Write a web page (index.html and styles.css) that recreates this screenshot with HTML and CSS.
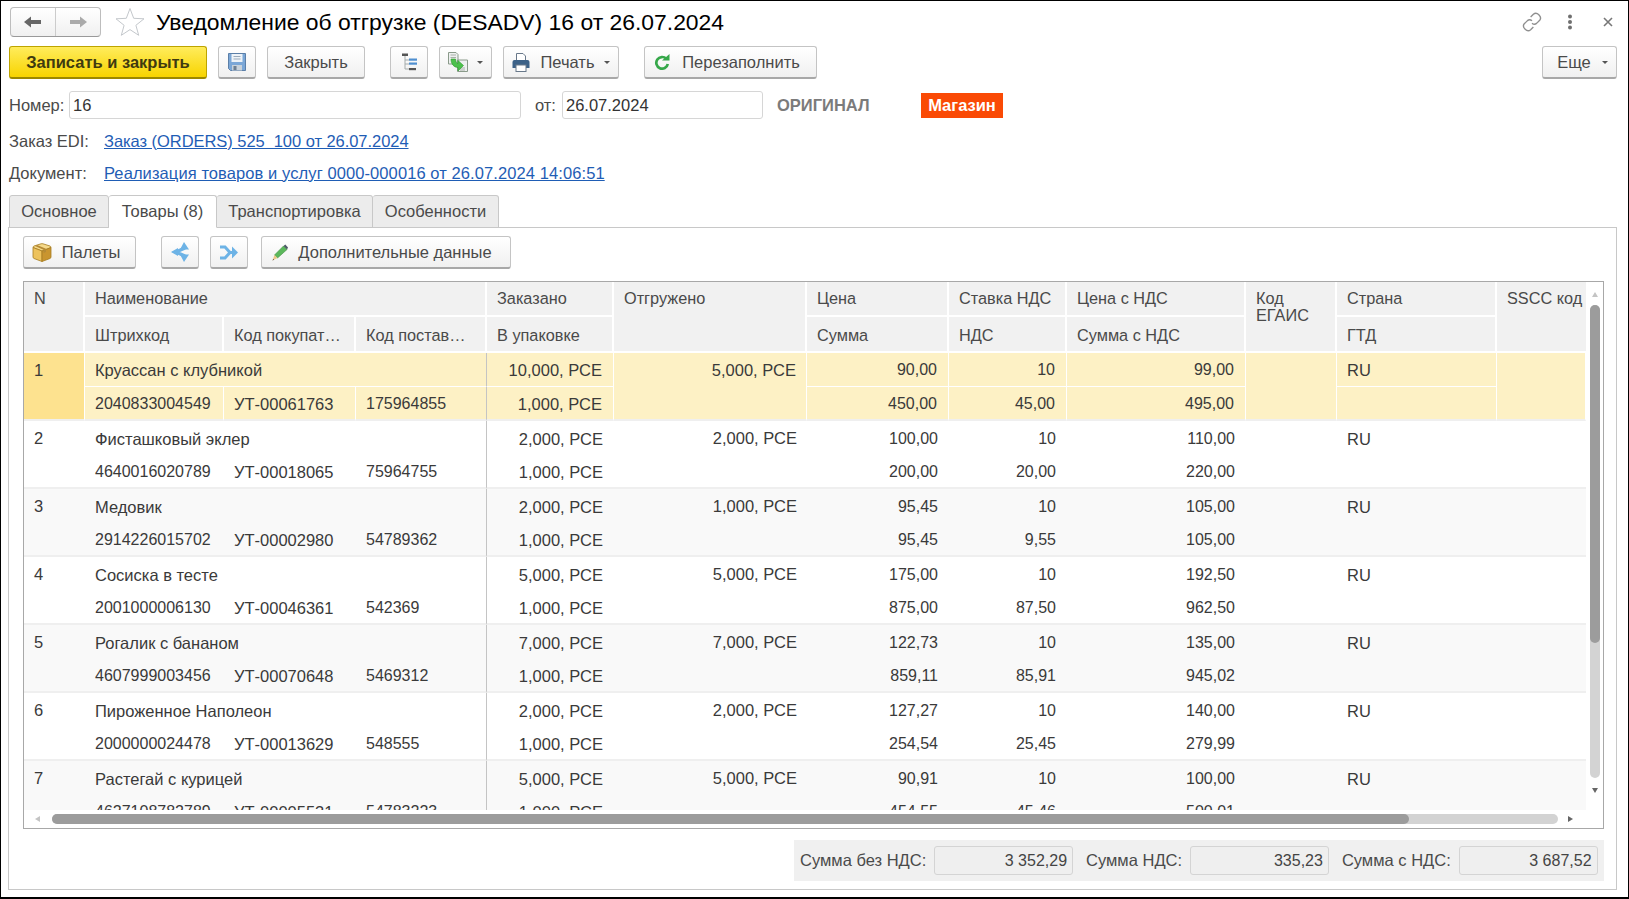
FILE: index.html
```html
<!DOCTYPE html>
<html lang="ru">
<head>
<meta charset="utf-8">
<title>Уведомление об отгрузке (DESADV) 16 от 26.07.2024</title>
<link rel="stylesheet" href="styles.css">
</head>
<body>
<div class="frame">
  <header class="head">
    <div class="nav">
      <button class="nav-btn"><svg width="18" height="14" viewBox="0 0 18 14"><path d="M0 7 7 1.500V5H17V9H7V12.500Z" fill="#666"/></svg></button>
      <button class="nav-btn"><svg width="18" height="14" viewBox="0 0 18 14"><path d="M18 7 11 1.500V5H1V9H11V12.500Z" fill="#aaa"/></svg></button>
    </div>
    <svg class="star" width="30" height="30" viewBox="0 0 30 30"><path d="M15 1.500 18.700 11.300 29 11.800 20.900 18.300 23.700 28.300 15 22.600 6.300 28.300 9.100 18.300 1 11.800 11.300 11.300Z" fill="#fff" stroke="#c4c8cc"/></svg>
    <h1 class="title">Уведомление об отгрузке (DESADV) 16 от 26.07.2024</h1>
    <div class="head-icons">
      <svg width="20" height="20" viewBox="0 0 22 22" fill="none" stroke="#8f8f8f" stroke-width="1.500"><path d="M9.500 5.500 12.500 2.500C14 1.200 16.500 1 18.500 3S20.800 7.500 19.500 9L16 12.500C14.500 13.800 12.500 13.600 11 12.300"/><path d="M12.500 16.500 9.500 19.500C8 20.800 5.500 21 3.500 19S1.200 14.500 2.500 13L6 9.500C7.500 8.200 9.500 8.400 11 9.700"/></svg>
      <svg width="6" height="16" viewBox="0 0 6 16" fill="#6f6f6f"><circle cx="3" cy="2.500" r="2"/><circle cx="3" cy="8" r="2"/><circle cx="3" cy="13.500" r="2"/></svg>
      <svg width="12" height="12" viewBox="0 0 12 12" stroke="#777" stroke-width="1.600"><path d="M2 2 10 10M10 2 2 10"/></svg>
    </div>
  </header>

  <div class="toolbar">
    <button class="btn btn-primary">Записать и закрыть</button>
    <button class="btn btn-icon">
      <svg width="18" height="18" viewBox="0 0 18 18"><path d="M.5.500H17.500V17.500H2.500L.5 15.500Z" fill="#7ba7d7" stroke="#5b7fa8"/><rect x="3.500" y="1" width="11" height="8" fill="#eef3f8"/><path d="M5.500 3.500H12.500M5.500 6H12.500" stroke="#9ab"/><rect x="4" y="12" width="10" height="5.500" fill="#c9d2da"/><rect x="5.500" y="13" width="3" height="4" fill="#6d7f92"/></svg>
    </button>
    <button class="btn btn-close">Закрыть</button>
    <button class="btn btn-icon btn-tree">
      <svg width="17" height="18" viewBox="0 0 17 18"><path d="M4 2V16M4 7H8M4 11H8M4 16H8" stroke="#a4abab" fill="none"/><rect x="1" y="0.500" width="6" height="2.500" fill="#555"/><rect x="8" y="5.500" width="8" height="2.200" fill="#4f8fd0"/><rect x="8" y="9.500" width="8" height="2.200" fill="#4f8fd0"/><rect x="8" y="15" width="7" height="2.200" fill="#555"/></svg>
    </button>
    <button class="btn btn-copy">
      <svg width="20" height="20" viewBox="0 0 20 20"><path d="M.5.500H8L10 2.500V12H.5Z" fill="#eef0f0" stroke="#8a9a8a"/><path d="M9.500 8H19.500V19.500H9.500Z" fill="#eef0f0" stroke="#8a9a8a"/><path d="M2.500 3H8M2.500 5.500H8M12 16H17M12 18H17" stroke="#a8b0a8"/><path d="M3 7H7.500C8 10.500 9 11.500 10 11.500V8.500L15.500 13.500 10 19V15.500C6 15.500 3 12 3 7Z" fill="#4cc04c" stroke="#2e9a2e" stroke-width=".6"/></svg>
      <span class="caret"></span>
    </button>
    <button class="btn btn-print">
      <svg class="ico" width="18" height="19" viewBox="0 0 18 19"><path d="M4.500.500H11L13.500 3V8H4.500Z" fill="#fff" stroke="#68788a"/><path d="M.5 9Q.5 7 2.500 7H15.500Q17.500 7 17.500 9V15H.5Z" fill="#3d6288"/><rect x="4" y="12" width="10" height="6.500" fill="#fff" stroke="#68788a"/></svg>
      <span>Печать</span><span class="caret"></span>
    </button>
    <button class="btn btn-refill">
      <svg class="ico ico-refill" width="16" height="16" viewBox="0 0 16 16"><path d="M12.300 4.800A5.800 5.800 0 1 0 13.800 10" fill="none" stroke="#36a84a" stroke-width="2.700"/><path d="M8 6.500H15.500V0Z" fill="#36a84a"/></svg>
      <span>Перезаполнить</span>
    </button>
    <button class="btn btn-more"><span>Еще</span><span class="caret"></span></button>
  </div>

  <div class="fields">
    <label class="lbl lbl-num">Номер:</label>
    <div class="input input-num">16</div>
    <label class="lbl lbl-from">от:</label>
    <div class="input input-date">26.07.2024</div>
    <span class="status">ОРИГИНАЛ</span>
    <span class="tag">Магазин</span>
  </div>

  <div class="linkrow"><span class="link-lbl">Заказ EDI:</span><a class="link link-order" href="#">Заказ (ORDERS) 525&nbsp; 100 от 26.07.2024</a></div>
  <div class="linkrow"><span class="link-lbl">Документ:</span><a class="link link-doc" href="#">Реализация товаров и услуг 0000-000016 от 26.07.2024 14:06:51</a></div>

  <nav class="tabs">
    <div class="tab tab-1">Основное</div>
    <div class="tab tab-2 tab-active">Товары (8)</div>
    <div class="tab tab-3">Транспортировка</div>
    <div class="tab tab-4">Особенности</div>
  </nav>

  <section class="panel">
    <div class="subbar">
      <button class="btn btn-pal">
        <svg class="ico" width="20" height="19" viewBox="0 0 20 19"><path d="M1 4.500Q1 3.500 2 3L9 .8Q10 .5 11 .8L18 3Q19 3.500 19 4.500L10 8Z" fill="#f5d98a" stroke="#a67c22" stroke-width=".8"/><path d="M1 4.500 10 8V18.500L2 15.500Q1 15 1 14Z" fill="#edc25c" stroke="#a67c22" stroke-width=".8"/><path d="M19 4.500 10 8V18.500L18 15.500Q19 15 19 14Z" fill="#c9952f" stroke="#a67c22" stroke-width=".8"/><path d="M5 2 14 5.700V9L11.500 10V6.700L3 3Z" fill="#b58a35"/></svg>
        <span>Палеты</span>
      </button>
      <button class="btn btn-arrow btn-ar1">
        <svg width="18" height="20" viewBox="0 0 18 20"><path d="M14 6 5 10 14 14" fill="none" stroke="#6db3e6" stroke-width="3.500"/><path d="M0 10 7 6V14Z" fill="#6db3e6"/><path d="M13 0 18 7.500 9 7.500Z" fill="#6db3e6"/><path d="M13 20 18 12.500 9 12.500Z" fill="#6db3e6"/></svg>
      </button>
      <button class="btn btn-arrow">
        <svg width="18" height="15" viewBox="0 0 18 15"><path d="M0 2H5L10 7.500 5 13H0M9 7.500H14" fill="none" stroke="#6db3e6" stroke-width="3"/><path d="M12 1.500 18 7.500 12 13.500Z" fill="#6db3e6"/></svg>
      </button>
      <button class="btn btn-extra">
        <svg class="ico" width="16" height="17" viewBox="0 0 16 17"><path d="M11.500 2 15 5.500 5.500 14 2.500 11Z" fill="#5cb85c" stroke="#3f8f3f" stroke-width=".6"/><path d="M11.500 2 13.300.5 16 3.500 15 5.500Z" fill="#4d5a66"/><path d="M2.500 11 5.500 14 .5 16.500Z" fill="#edc88a"/><path d="M1.200 15 2 15.800 .5 16.500Z" fill="#333"/></svg>
        <span>Дополнительные данные</span>
      </button>
    </div>

    <div class="grid">
      <div class="grid-top">
        <div class="table-clip">
          <table class="tbl">
            <colgroup>
              <col class="c-n"><col class="c-bar"><col class="c-buy"><col class="c-sup"><col class="c-ord"><col class="c-shp"><col class="c-prc"><col class="c-vat"><col class="c-tot"><col class="c-ega"><col class="c-cty"><col class="c-ssc">
            </colgroup>
            <thead>
              <tr class="h1">
                <th rowspan="2">N</th><th colspan="3">Наименование</th><th>Заказано</th><th rowspan="2">Отгружено</th><th>Цена</th><th>Ставка НДС</th><th>Цена с НДС</th><th rowspan="2" class="wrap">Код<br>ЕГАИС</th><th>Страна</th><th rowspan="2" class="nowrap">SSCC код</th>
              </tr>
              <tr class="h2">
                <th>Штрихкод</th><th>Код покупат…</th><th>Код постав…</th><th>В упаковке</th><th>Сумма</th><th>НДС</th><th>Сумма с НДС</th><th>ГТД</th>
              </tr>
            </thead>
            <tbody>
              <tr class="l1 sel"><td rowspan="2" class="num">1</td><td colspan="3" class="sep">Круассан с клубникой</td><td class="r">10,000, РСЕ</td><td rowspan="2" class="r top">5,000, РСЕ</td><td class="n">90,00</td><td class="n">10</td><td class="n">99,00</td><td rowspan="2"></td><td>RU</td><td rowspan="2"></td></tr>
              <tr class="l2 sel"><td class="b">2040833004549</td><td>УТ-00061763</td><td class="sep b">175964855</td><td class="r">1,000, РСЕ</td><td class="n">450,00</td><td class="n">45,00</td><td class="n">495,00</td><td></td></tr>

              <tr class="l1"><td rowspan="2" class="num">2</td><td colspan="3" class="sep">Фисташковый эклер</td><td class="r">2,000, РСЕ</td><td rowspan="2" class="r top">2,000, РСЕ</td><td class="n">100,00</td><td class="n">10</td><td class="n">110,00</td><td rowspan="2"></td><td>RU</td><td rowspan="2"></td></tr>
              <tr class="l2"><td class="b">4640016020789</td><td>УТ-00018065</td><td class="sep b">75964755</td><td class="r">1,000, РСЕ</td><td class="n">200,00</td><td class="n">20,00</td><td class="n">220,00</td><td></td></tr>

              <tr class="l1 alt"><td rowspan="2" class="num">3</td><td colspan="3" class="sep">Медовик</td><td class="r">2,000, РСЕ</td><td rowspan="2" class="r top">1,000, РСЕ</td><td class="n">95,45</td><td class="n">10</td><td class="n">105,00</td><td rowspan="2"></td><td>RU</td><td rowspan="2"></td></tr>
              <tr class="l2 alt"><td class="b">2914226015702</td><td>УТ-00002980</td><td class="sep b">54789362</td><td class="r">1,000, РСЕ</td><td class="n">95,45</td><td class="n">9,55</td><td class="n">105,00</td><td></td></tr>

              <tr class="l1"><td rowspan="2" class="num">4</td><td colspan="3" class="sep">Сосиска в тесте</td><td class="r">5,000, РСЕ</td><td rowspan="2" class="r top">5,000, РСЕ</td><td class="n">175,00</td><td class="n">10</td><td class="n">192,50</td><td rowspan="2"></td><td>RU</td><td rowspan="2"></td></tr>
              <tr class="l2"><td class="b">2001000006130</td><td>УТ-00046361</td><td class="sep b">542369</td><td class="r">1,000, РСЕ</td><td class="n">875,00</td><td class="n">87,50</td><td class="n">962,50</td><td></td></tr>

              <tr class="l1 alt"><td rowspan="2" class="num">5</td><td colspan="3" class="sep">Рогалик с бананом</td><td class="r">7,000, РСЕ</td><td rowspan="2" class="r top">7,000, РСЕ</td><td class="n">122,73</td><td class="n">10</td><td class="n">135,00</td><td rowspan="2"></td><td>RU</td><td rowspan="2"></td></tr>
              <tr class="l2 alt"><td class="b">4607999003456</td><td>УТ-00070648</td><td class="sep b">5469312</td><td class="r">1,000, РСЕ</td><td class="n">859,11</td><td class="n">85,91</td><td class="n">945,02</td><td></td></tr>

              <tr class="l1"><td rowspan="2" class="num">6</td><td colspan="3" class="sep">Пироженное Наполеон</td><td class="r">2,000, РСЕ</td><td rowspan="2" class="r top">2,000, РСЕ</td><td class="n">127,27</td><td class="n">10</td><td class="n">140,00</td><td rowspan="2"></td><td>RU</td><td rowspan="2"></td></tr>
              <tr class="l2"><td class="b">2000000024478</td><td>УТ-00013629</td><td class="sep b">548555</td><td class="r">1,000, РСЕ</td><td class="n">254,54</td><td class="n">25,45</td><td class="n">279,99</td><td></td></tr>

              <tr class="l1 alt"><td rowspan="2" class="num">7</td><td colspan="3" class="sep">Растегай с курицей</td><td class="r">5,000, РСЕ</td><td rowspan="2" class="r top">5,000, РСЕ</td><td class="n">90,91</td><td class="n">10</td><td class="n">100,00</td><td rowspan="2"></td><td>RU</td><td rowspan="2"></td></tr>
              <tr class="l2 alt"><td class="b">4627108782789</td><td>УТ-00005531</td><td class="sep b">54783223</td><td class="r">1,000, РСЕ</td><td class="n">454,55</td><td class="n">45,46</td><td class="n">500,01</td><td></td></tr>
            </tbody>
          </table>
        </div>
        <div class="vscroll">
          <span class="ar ar-up"></span>
          <div class="vtrack"><div class="vthumb"></div></div>
          <span class="ar ar-down"></span>
        </div>
      </div>
      <div class="hscroll">
        <span class="ar ar-left"></span>
        <div class="htrack"><div class="hthumb"></div></div>
        <span class="ar ar-right"></span>
      </div>
    </div>

    <div class="totals-wrap">
      <div class="totals">
        <span class="tot-lbl">Сумма без НДС:</span><div class="tot-val">3 352,29</div>
        <span class="tot-lbl">Сумма НДС:</span><div class="tot-val">335,23</div>
        <span class="tot-lbl">Сумма с НДС:</span><div class="tot-val">3 687,52</div>
      </div>
    </div>
  </section>
</div>
</body>
</html>
```

FILE: styles.css
```css
* { box-sizing: border-box; }
html, body { margin: 0; padding: 0; }
body { font-family: "Liberation Sans", Arial, sans-serif; font-size: 16.5px; color: #4a4a4a; background: #fff; }

.frame { width: 1629px; height: 899px; border: 1px solid #000; border-bottom-width: 2px; overflow: hidden; background: #fff; }

/* head */
.head { display: flex; align-items: center; height: 34px; margin-top: 4px; padding-left: 9px; }
.nav { display: flex; width: 91px; height: 30px; border: 1px solid #bdbdbd; border-bottom-color: #999; border-radius: 4px; background: linear-gradient(#fff, #f0f0f0); }
.nav-btn { flex: 1; border: 0; padding: 0; background: none; display: flex; align-items: center; justify-content: center; }
.nav-btn + .nav-btn { border-left: 1px solid #ccc; }
.star { margin-left: 14px; }
.title { margin: 0 0 0 11px; font-size: 22.9px; font-weight: 400; color: #000; white-space: nowrap; }
.head-icons { margin-left: auto; display: flex; align-items: center; padding-right: 14px; }
.head-icons svg:nth-child(2) { margin-left: 25px; }
.head-icons svg:nth-child(3) { margin-left: 29px; }

/* buttons */
.btn { height: 33px; padding: 0; font: inherit; color: #4a4a4a; display: inline-flex; align-items: center; justify-content: center; border: 1px solid #c4c4c4; border-bottom: 2px solid #a8a8a8; border-radius: 3px; background: linear-gradient(#fff, #f0f0f0); white-space: nowrap; }
.ico { margin-right: 10px; }
.ico-refill { margin-right: 12px; }
.caret { display: inline-block; width: 0; height: 0; border-left: 3px solid transparent; border-right: 3px solid transparent; border-top: 3px solid #555; }

.toolbar { display: flex; margin-top: 7px; padding: 0 11px 0 8px; }
.btn-primary { width: 198px; font-weight: 700; color: #3f3a10; background: linear-gradient(#ffec5c, #f8d400); border-color: #bda400; border-bottom-color: #9c8800; }
.btn-icon { width: 38px; margin-left: 11px; }
.btn-close { width: 98px; margin-left: 11px; }
.btn-tree { margin-left: 25px; }
.btn-copy { width: 53px; margin-left: 11px; }
.btn-copy .caret { margin-left: 9px; }
.btn-print { width: 116px; margin-left: 11px; }
.btn-print .caret { margin-left: 9px; }
.btn-refill { width: 173px; margin-left: 25px; padding-right: 7px; }
.btn-more { width: 75px; margin-left: auto; padding-left: 6px; }
.btn-more .caret { margin-left: 11px; }

/* fields */
.fields { display: flex; align-items: center; height: 28px; margin-top: 12px; padding-left: 8px; }
.lbl-num { width: 60px; }
.lbl-from { width: 27px; margin-left: 14px; }
.input { height: 28px; line-height: 26px; padding-left: 3px; border: 1px solid #d6d6d6; border-radius: 3px; color: #333; background: #fff; }
.input-num { width: 452px; }
.input-date { width: 201px; }
.status { margin-left: 14px; width: 144px; font-weight: 700; color: #7b7b7b; }
.tag { width: 82px; height: 25px; line-height: 24px; text-align: center; font-weight: 700; color: #fff; background: #fa4a05; }

.linkrow { display: flex; align-items: center; height: 32px; padding-left: 8px; }
.fields + .linkrow { margin-top: 6px; }
.link-lbl { width: 95px; }
.link { color: #1f5db5; text-decoration: underline; }
.link-order { letter-spacing: -.05px; }
.link-doc { letter-spacing: .09px; }

/* tabs */
.tabs { display: flex; margin: 6px 0 -1px 8px; height: 33px; position: relative; z-index: 1; }
.tab { height: 33px; line-height: 31px; text-align: center; background: #ececec; border: 1px solid #c8c8c8; border-left: 0; border-radius: 3px 3px 0 0; }
.tab-1 { width: 100px; border-left: 1px solid #c8c8c8; }
.tab-2 { width: 108px; }
.tab-3 { width: 156px; }
.tab-4 { width: 126px; }
.tab-active { background: #fff; border-bottom-color: #fff; }

.panel { margin-left: 7px; width: 1609px; height: 663px; border: 1px solid #c8c8c8; padding: 8px 0 0 14px; }
.subbar { display: flex; }
.btn-pal { width: 113px; padding-right: 7px; }
.btn-arrow { width: 38px; margin-left: 11px; }
.btn-ar1 { margin-left: 25px; }
.btn-extra { width: 250px; margin-left: 13px; padding-right: 8px; }

/* grid */
.grid { width: 1581px; height: 548px; margin-top: 12px; border: 1px solid #a8a8a8; display: flex; flex-direction: column; }
.grid-top { display: flex; height: 528px; }
.table-clip { width: 1562px; height: 528px; overflow: hidden; }
.tbl { border-collapse: separate; border-spacing: 0; table-layout: fixed; width: 1562px; color: #3a3a3a; }
.c-n { width: 61px; } .c-bar { width: 139px; } .c-buy { width: 132px; } .c-sup { width: 131px; }
.c-ord { width: 127px; } .c-shp { width: 193px; } .c-prc { width: 142px; } .c-vat { width: 118px; }
.c-tot { width: 179px; } .c-ega { width: 91px; } .c-cty { width: 160px; } .c-ssc { width: 89px; }

.tbl th { font-size: 16.3px; font-weight: 400; text-align: left; vertical-align: top; padding: 7px 0 0 10px; background: #f1f1f1; color: #4a4a4a; border-right: 2px solid #fff; border-bottom: 2px solid #fff; white-space: nowrap; overflow: hidden; }
.h1 th { height: 35px; }
.h2 th { height: 36px; padding-top: 9px; }
.tbl .wrap { line-height: 17px; padding-top: 8px; }
.tbl .nowrap { border-right: 0; }

.tbl td { height: 34px; line-height: 20px; padding: 0 11px 0 10px; white-space: nowrap; overflow: hidden; background: #fff; }
.tbl td[rowspan] { border-bottom: 2px solid #efefef; vertical-align: top; padding-top: 8px; }
.tbl td.top { padding-right: 10px; }
.l2 td { border-bottom: 2px solid #efefef; padding-top: 2px; }
.tbl .l1 td { padding-top: 1px; }
.tbl .l1 td[rowspan] { padding-top: 7px; }
.alt td { background: #f9f9f9; }
.r { text-align: right; }
.n { text-align: right; font-size: 16px; }
.b { font-size: 16px; }
.tbl .sep { border-right: 1px solid #c4c4c4; }

.sel td { background: #fdf1c5; border-right: 1px solid #fff; }
.l1.sel td:not([rowspan]) { border-bottom: 1px solid #fff; }
.tbl .sel .num { background: #fde28f; }

/* scrollbars */
.vscroll { width: 17px; display: flex; flex-direction: column; align-items: center; }
.vtrack { width: 10px; height: 473px; margin: 8px 0 10px 0; border-radius: 5px; background: #d3d3d3; }
.vthumb { width: 10px; height: 338px; border-radius: 5px; background: #9c9c9c; }
.ar-up { margin-top: 10px; border: 3px solid transparent; border-top: 0; border-bottom: 5px solid #c4c4c4; }
.ar-down { border: 3px solid transparent; border-bottom: 0; border-top: 5px solid #666; }
.ar { display: block; width: 0; height: 0; }

.hscroll { display: flex; align-items: center; height: 18px; padding-left: 11px; }
.htrack { width: 1506px; height: 10px; margin: 0 10px 0 12px; border-radius: 5px; background: #d3d3d3; }
.hthumb { width: 1357px; height: 10px; border-radius: 5px; background: #9c9c9c; }
.ar-left { border: 3px solid transparent; border-left: 0; border-right: 5px solid #c4c4c4; }
.ar-right { border: 3px solid transparent; border-right: 0; border-left: 5px solid #666; }

/* totals */
.totals-wrap { display: flex; justify-content: flex-end; width: 1581px; margin-top: 11px; }
.totals { display: flex; align-items: center; width: 810px; height: 41px; padding-left: 6px; background: #f0f0f0; }
.tot-lbl { color: #4a4a4a; margin-right: 7.8px; white-space: nowrap; }
.tot-val { width: 139px; height: 29px; line-height: 27px; margin-right: 13px; padding-right: 5px; font-size: 16px; text-align: right; background: #efefef; border: 1px solid #d4d4d4; border-radius: 3px; color: #444; }
.tot-val:last-child { margin-right: 0; }
```
